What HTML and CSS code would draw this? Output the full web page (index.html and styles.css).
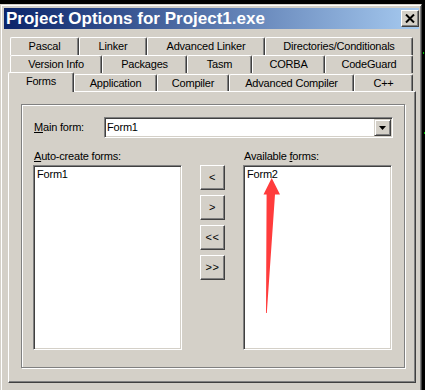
FILE: index.html
```html
<!DOCTYPE html>
<html>
<head>
<meta charset="utf-8">
<title>Project Options</title>
<link rel="stylesheet" href="styles.css">
</head>
<body>
<div class="window">
  <div class="titlebar">
    <span class="title">Project Options for Project1.exe</span>
    <span class="close"><svg width="10" height="9" viewBox="0 0 10 9"><path d="M1 0.5 L9 8.5 M9 0.5 L1 8.5" stroke="#000" stroke-width="2"/></svg></span>
  </div>
  <div class="client">
    <div class="tabrow r1">
      <div class="tab w69">Pascal</div>
      <div class="tab w68">Linker</div>
      <div class="tab w118">Advanced Linker</div>
      <div class="tab w148">Directories/Conditionals</div>
    </div>
    <div class="tabrow r2">
      <div class="tab w92">Version Info</div>
      <div class="tab w85">Packages</div>
      <div class="tab w65">Tasm</div>
      <div class="tab w73">CORBA</div>
      <div class="tab w88">CodeGuard</div>
    </div>
    <div class="tabrow r3">
      <div class="tab selected w66">Forms</div>
      <div class="tab w83">Application</div>
      <div class="tab w72">Compiler</div>
      <div class="tab w125">Advanced Compiler</div>
      <div class="tab w59">C++</div>
    </div>
    <div class="page">
      <div class="group">
        <div class="mainrow">
          <span class="mainlabel"><u>M</u>ain form:</span>
          <div class="combo">
            <span class="combotext">Form1</span>
            <span class="dropbtn"><svg width="7" height="4" viewBox="0 0 7 4"><path d="M0 0 H7 L3.5 4 Z" fill="#000"/></svg></span>
          </div>
        </div>
        <div class="lists">
          <div class="col">
            <div class="lbl"><u>A</u>uto-create forms:</div>
            <div class="listbox"><div class="item">Form1</div></div>
          </div>
          <div class="btns">
            <div class="btn">&lt;</div>
            <div class="btn">&gt;</div>
            <div class="btn">&lt;&lt;</div>
            <div class="btn">&gt;&gt;</div>
          </div>
          <div class="col">
            <div class="lbl">Available <u>f</u>orms:</div>
            <div class="listbox annotated">
              <div class="item">Form2</div>
              <svg class="arrow" width="149" height="185" viewBox="0 0 149 185"><polygon points="28.7,13 37,29.5 32,29.5 23.8,148 23,148 23.6,29.5 20.5,29.5" fill="#ff3c3c"/></svg>
            </div>
          </div>
        </div>
      </div>
    </div>
  </div>
</div>
<div class="speck s1"></div>
<div class="speck s2"></div>
</body>
</html>
```
FILE: styles.css
```css
html, body {
  margin: 0;
  padding: 0;
}
body {
  position: relative;
  width: 425px;
  height: 390px;
  overflow: hidden;
  background: #000;
  font-family: "Liberation Sans", Arial, sans-serif;
  font-size: 11px;
  color: #000;
}
.window {
  box-sizing: border-box;
  margin-top: 4px;
  width: 422px;
  height: 400px;
  background: #d4d0c8;
  border: 1px solid;
  border-color: #d4d0c8 #404040 #404040 #d4d0c8;
  box-shadow: inset 1px 1px #fff, inset -1px -1px #808080;
  padding: 3px 2px 3px 3px;
}
.titlebar {
  height: 21px;
  background: linear-gradient(to right, #0a246a, #a6caf0);
  display: flex;
  align-items: center;
  justify-content: space-between;
}
.title {
  color: #fff;
  font-weight: bold;
  font-size: 17px;
  line-height: 19px;
  padding-left: 2px;
  white-space: nowrap;
}
.close {
  box-sizing: border-box;
  width: 18px;
  height: 17px;
  background: #d4d0c8;
  border: 1px solid;
  border-color: #fff #404040 #404040 #fff;
  box-shadow: inset -1px -1px #808080;
  display: flex;
  align-items: center;
  justify-content: center;
  padding-bottom: 1px;
}
.close svg { display: block; }
.client {
  padding-top: 8px;
}
.tabrow {
  display: flex;
  margin-left: 6px;
  width: 403px;
}
.r1 { height: 18px; }
.r2 { height: 17px; }
.r3 { height: 19px; }
.tab {
  box-sizing: border-box;
  flex: none;
  height: 18px;
  border-top: 1px solid #fff;
  border-left: 1px solid #fff;
  border-right: 1px solid #404040;
  box-shadow: inset -1px 0 #808080;
  border-radius: 2px 2px 0 0;
  background: #d4d0c8;
  text-align: center;
  line-height: 17px;
  letter-spacing: -0.2px;
  white-space: nowrap;
}
.r3 .tab {
  margin-top: 2px;
  height: 17px;
}
.r3 .tab.selected {
  margin-top: 0;
  margin-left: -2px;
  height: 20px;
  position: relative;
  z-index: 1;
}
.w59 { width: 59px; }
.w65 { width: 65px; }
.w66 { width: 66px; }
.w68 { width: 68px; }
.w69 { width: 69px; }
.w72 { width: 72px; }
.w73 { width: 73px; }
.w83 { width: 83px; }
.w85 { width: 85px; }
.w88 { width: 88px; }
.w92 { width: 92px; }
.w118 { width: 118px; }
.w125 { width: 125px; }
.w148 { width: 148px; }
.page {
  box-sizing: border-box;
  margin-left: 4px;
  width: 408px;
  height: 292px;
  border-top: 1px solid #fff;
  border-left: 1px solid #fff;
  border-right: 1px solid #404040;
  border-bottom: 1px solid #404040;
  box-shadow: inset -1px -1px #808080;
  padding: 12px;
}
.group {
  box-sizing: border-box;
  width: 384px;
  height: 264px;
  border: 1px solid #808080;
  box-shadow: inset 1px 1px #fff, 1px 1px #fff;
  padding: 12px 0 0 11px;
}
.mainrow {
  display: flex;
  align-items: center;
  height: 21px;
}
.mainlabel {
  width: 70px;
  margin-left: 1px;
  line-height: 13px;
  letter-spacing: -0.2px;
}
.combo {
  box-sizing: border-box;
  width: 289px;
  height: 21px;
  background: #fff;
  border: 1px solid;
  border-color: #808080 #fff #fff #808080;
  box-shadow: inset 1px 1px #404040, inset -1px -1px #d4d0c8;
  padding: 1px;
  display: flex;
  align-items: center;
  justify-content: space-between;
}
.combotext {
  padding-left: 1px;
  line-height: 13px;
  letter-spacing: -0.2px;
}
.dropbtn {
  box-sizing: border-box;
  width: 17px;
  height: 17px;
  background: #d4d0c8;
  border: 1px solid;
  border-color: #d4d0c8 #404040 #404040 #d4d0c8;
  box-shadow: inset 1px 1px #fff, inset -1px -1px #808080;
  display: flex;
  align-items: center;
  justify-content: center;
}
.dropbtn svg { display: block; }
.lists {
  display: flex;
  margin-top: 12px;
}
.col {
  width: 149px;
  flex: none;
}
.lbl {
  margin-left: 1px;
  line-height: 13px;
  height: 13px;
  margin-bottom: 2px;
  letter-spacing: -0.2px;
}
.listbox {
  box-sizing: border-box;
  width: 149px;
  height: 185px;
  background: #fff;
  border: 1px solid;
  border-color: #808080 #fff #fff #808080;
  box-shadow: inset 1px 1px #404040, inset -1px -1px #d4d0c8;
  padding: 2px 3px;
}
.item {
  line-height: 13px;
  letter-spacing: -0.2px;
}
.annotated {
  position: relative;
}
.arrow {
  position: absolute;
  left: -1px;
  top: -1px;
}
.btns {
  flex: none;
  width: 25px;
  margin: 15px 18px 0;
  display: flex;
  flex-direction: column;
  gap: 5px;
}
.btn {
  box-sizing: border-box;
  width: 25px;
  height: 25px;
  background: #d4d0c8;
  border: 1px solid;
  border-color: #fff #404040 #404040 #fff;
  box-shadow: inset -1px -1px #808080;
  display: flex;
  align-items: center;
  justify-content: center;
  line-height: 13px;
  letter-spacing: 0.5px;
}
.speck {
  position: absolute;
  width: 1px;
  height: 2px;
  background: #00c000;
}
.s1 { left: 423px; top: 52px; }
.s2 { left: 424px; top: 132px; }
```
